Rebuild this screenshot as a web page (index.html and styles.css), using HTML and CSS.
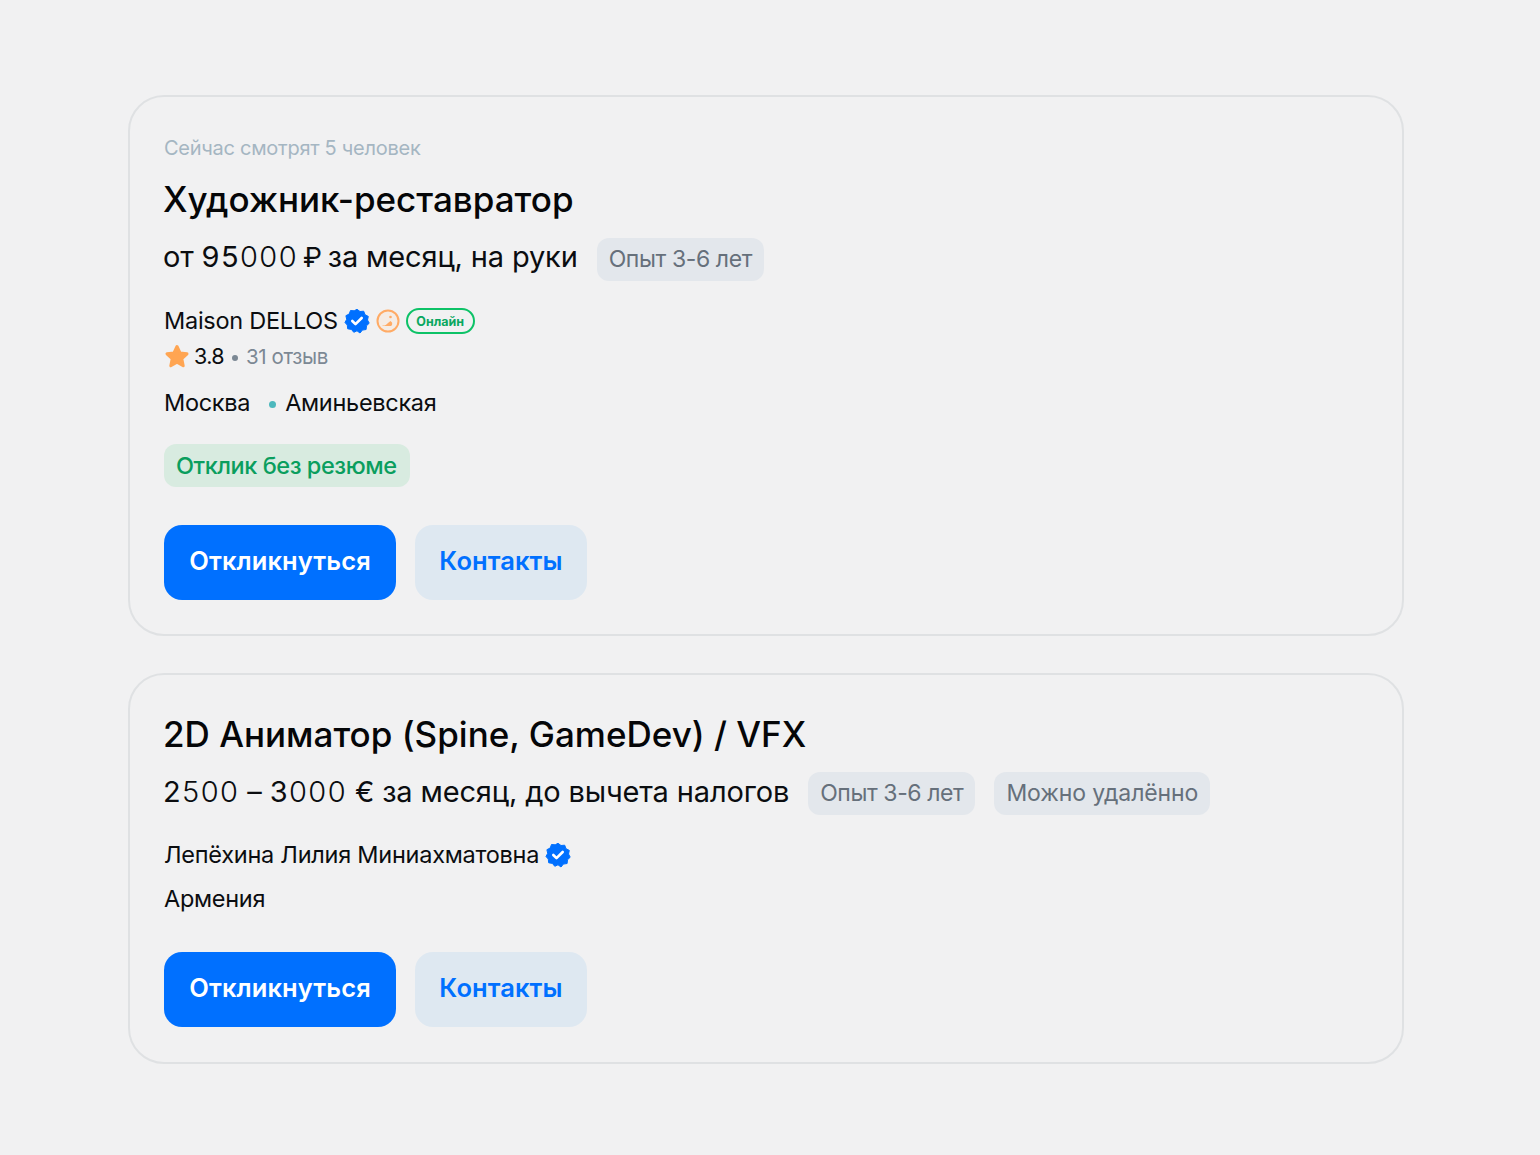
FILE: index.html
```html
<!DOCTYPE html>
<html lang="ru">
<head>
<meta charset="utf-8">
<title>Вакансии</title>
<link rel="stylesheet" href="styles.css">
</head>
<body>
<svg class="defs" width="0" height="0" aria-hidden="true">
  <symbol id="verified" viewBox="0 0 26 26">
    <path fill="#0070ff" stroke="#0070ff" stroke-width="1" stroke-linejoin="round" d="M13 1.300l3 2.200 3.700-.3 1.300 3.500 3.300 1.700-.8 3.600 1.700 3.200-2.700 2.600-.4 3.700-3.700.6-2.400 2.900L13 22.800l-3.200 1.500-2.400-2.900-3.700-.6-.4-3.700L1 14.500l1.700-3.200-.8-3.600 3.300-1.700 1.300-3.500 3.700.3z"/>
    <path fill="none" stroke="#fff" stroke-width="2.600" stroke-linecap="round" stroke-linejoin="round" d="M8.300 13l3.200 3.200 6.200-6.200"/>
  </symbol>
</svg>

<main class="list">
  <article class="card">
    <div class="watching">Сейчас смотрят 5 человек</div>
    <h2 class="title">Художник-реставратор</h2>
    <div class="salary-row">
      <span class="salary">от <span class="num">95<span class="thin">000</span></span> <span class="rub">₽</span> за месяц, на руки</span>
      <span class="tag">Опыт 3-6 лет</span>
    </div>
    <div class="company-row">
      <span class="company">Maison DELLOS</span>
      <svg class="verified"><use href="#verified"/></svg>
      <svg class="award" viewBox="0 0 24 24">
        <circle cx="12" cy="12" r="10.500" fill="#fbe3cd" fill-opacity=".35" stroke="#ffab66" stroke-width="2"/>
        <path fill="#ffab66" d="M6 16.500c2.500.3 4.500-.6 6-2.500l2.500-2 1.500 1.500c.5 1.500 0 3-1 3.500H7z"/>
        <circle cx="14.500" cy="8" r="1.300" fill="#ffab66"/>
      </svg>
      <span class="online">Онлайн</span>
    </div>
    <div class="rating-row">
      <svg class="star" viewBox="0 0 26 26"><path fill="#ffa552" stroke="#ffa552" stroke-width="3" stroke-linejoin="round" d="M13 3.500l3 6.500 7 .8-5.200 4.900 1.400 7L13 19.300l-6.200 3.400 1.400-7L3 10.800l7-.8z"/></svg>
      <span class="score">3.8</span>
      <span class="sep"></span>
      <span class="reviews">31 отзыв</span>
    </div>
    <div class="location first-loc">
      <span>Москва</span>
      <span class="metro-dot"></span>
      <span>Аминьевская</span>
    </div>
    <div class="green-row"><span class="green-tag">Отклик без резюме</span></div>
    <div class="actions">
      <button class="btn primary">Откликнуться</button>
      <button class="btn secondary">Контакты</button>
    </div>
  </article>

  <article class="card second">
    <h2 class="title">2D Аниматор (Spine, GameDev) / VFX</h2>
    <div class="salary-row">
      <span class="salary"><span class="num">2<span class="thin">500</span></span> – <span class="num">3<span class="thin">000</span></span> € за месяц, до вычета налогов</span>
      <span class="tag">Опыт 3-6 лет</span>
      <span class="tag wide">Можно удалённо</span>
    </div>
    <div class="company-row">
      <span class="company">Лепёхина Лилия Миниахматовна</span>
      <svg class="verified"><use href="#verified"/></svg>
    </div>
    <div class="location country">Армения</div>
    <div class="actions">
      <button class="btn primary">Откликнуться</button>
      <button class="btn secondary">Контакты</button>
    </div>
  </article>
</main>
</body>
</html>
```

FILE: styles.css
```css
* { box-sizing: border-box; }
html, body { margin: 0; padding: 0; }
body {
  background: #f1f1f2;
  color: #0b0d10;
  font-family: Inter, "Noto Sans", "Liberation Sans", sans-serif;
  min-height: 1155px;
}
.defs { display: block; height: 0; }
.list {
  display: flex;
  flex-direction: column;
  gap: 37px;
  padding: 95px 136px 0 128px;
}
.card {
  border: 2px solid #dfe1e3;
  border-radius: 36px;
  padding: 37px 34px 35px;
  height: 541px;
}
.card.second { height: 391px; }
.watching {
  color: #a5b6c2;
  font-size: 20px;
  line-height: 28px;
  letter-spacing: -.27px;
}
.title {
  margin: 15px 0 0 -1px;
  font-size: 35px;
  line-height: 44px;
  font-weight: 500;
  letter-spacing: 0;
  color: #050608;
}
.second .title { margin-top: 0; }
.salary-row {
  display: flex;
  align-items: center;
  gap: 19px;
  margin-top: 17px;
}
.second .salary-row { margin-top: 16px; }
.salary {
  font-size: 29px;
  line-height: 43px;
  letter-spacing: -.15px;
  margin: -5px 0 0 -1px;
}
.num { letter-spacing: 1.400px; }
.thin { font-weight: 300; }
.rub { font-size: 27px; margin: 0 -2px 0 -3px; }
.tag {
  display: inline-block;
  background: #e3e7ec;
  color: #66707b;
  font-size: 23px;
  line-height: 43px;
  height: 43px;
  padding: 0 12px;
  border-radius: 12px;
  letter-spacing: -.4px;
}
.tag.wide { letter-spacing: -.12px; }
.company-row {
  display: flex;
  align-items: center;
  margin-top: 22px;
  height: 36px;
}
.company { font-size: 23.500px; letter-spacing: -.26px; padding-bottom: 1px; }
.verified { width: 26px; height: 26px; margin-left: 6px; flex: none; }
.award { width: 24px; height: 24px; margin-left: 6px; flex: none; }
.online {
  margin-left: 6px;
  border: 2px solid #0dc267;
  border-radius: 14px;
  height: 26px;
  width: 69px;
  color: #0aa760;
  font-size: 12.500px;
  font-weight: 700;
  line-height: 23px;
  text-align: center;
}
.rating-row {
  display: flex;
  align-items: center;
  height: 32px;
  margin-top: 1px;
}
.star { width: 26px; height: 26px; flex: none; }
.score { font-size: 21.500px; margin-left: 4px; letter-spacing: -.6px; }
.sep {
  width: 6px; height: 6px; border-radius: 50%;
  background: #7c8894;
  margin: 4px 8px 0;
}
.reviews { font-size: 20.500px; color: #7c8894; letter-spacing: -.4px; }
.location {
  display: flex;
  align-items: center;
  font-size: 23.500px;
  letter-spacing: -.3px;
  height: 40px;
}
.first-loc { margin-top: 10px; }
.metro-dot {
  width: 7px; height: 7px; border-radius: 50%;
  background: #4db8bd;
  margin: 4px 9px 0 19px;
}
.country { margin-top: 5px; }
.green-row { margin-top: 22px; }
.green-tag {
  display: inline-block;
  background: #d8ebe0;
  color: #0a9e5e;
  font-size: 23.500px;
  font-weight: 500;
  line-height: 43px;
  height: 43px;
  padding: 0 13px 0 12px;
  border-radius: 12px;
  letter-spacing: -.45px;
}
.actions {
  display: flex;
  gap: 19px;
  margin-top: 38px;
}
.second .actions { margin-top: 34px; }
.btn {
  border: 0;
  height: 75px;
  border-radius: 18px;
  font-family: inherit;
  font-size: 25.500px;
  font-weight: 600;
  letter-spacing: .1px;
  padding: 0 0 4px;
}
.primary { background: #0070ff; color: #fff; width: 232px; }
.secondary { background: #dee8f1; color: #0070ff; width: 172px; }
```
